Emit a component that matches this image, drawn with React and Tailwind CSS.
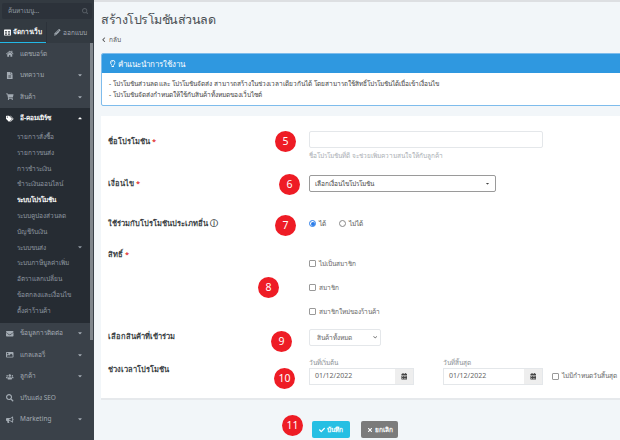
import React from "react";
import { FaHome, FaFileAlt, FaShoppingCart, FaTags, FaEnvelope, FaImage, FaUsers, FaSearch, FaBullhorn, FaCaretDown, FaCaretUp, FaTable, FaPencilAlt, FaChevronLeft, FaCheck, FaTimes, FaCalendarAlt, FaRegLightbulb, FaChevronDown } from "react-icons/fa";

const font = { fontFamily: '"Noto Sans", Roboto, "Liberation Sans", sans-serif' };

function MainItem({ Icon, label, caret, active }) {
  return (
    <div className={`flex h-[21.5px] items-center pl-[6px] pr-[7px] text-[6.5px] ${active ? "bg-[#262c33] font-bold text-white" : "text-[#a3abb3]"}`}>
      <span className="flex w-[13px] justify-start"><Icon className={`text-[7.5px] ${active ? "text-white" : "text-[#a3abb3]"}`} /></span>
      <span className="ml-[1px] flex-1 truncate">{label}</span>
      {caret === "down" && <FaCaretDown className="text-[6px]" />}
      {caret === "up" && <FaCaretUp className="text-[6px]" />}
    </div>
  );
}

function SubItem({ label, active, caret }) {
  return (
    <div className={`flex h-[15.8px] items-center pl-[17px] pr-[7px] text-[6.5px] ${active ? "font-bold text-white" : "text-[#8f98a1]"}`}>
      <span className="flex-1 truncate">{label}</span>
      {caret && <FaCaretDown className="text-[6px]" />}
    </div>
  );
}

function Badge({ n, className }) {
  return (
    <div className={`absolute flex h-[21px] w-[21px] items-center justify-center rounded-full bg-[#ee1c25] text-[10.5px] text-white ${className}`}>{n}</div>
  );
}

function Label({ children, req, className = "" }) {
  return (
    <div className={`text-[7.5px] font-semibold text-[#3a3f44] ${className}`}>
      {children}{req && <span className="text-[#e02b2b]"> *</span>}
    </div>
  );
}

function Check({ label }) {
  return (
    <div className="flex items-center gap-[3px] whitespace-nowrap text-[6.5px] text-[#666]">
      <span className="h-[7px] w-[7px] rounded-[1px] border border-[#999] bg-white" />
      <span>{label}</span>
    </div>
  );
}

function DateField({ label, w }) {
  return (
    <div>
      <div className="mb-[1px] text-[6.5px] leading-[9px] text-[#8a8f94]">{label}</div>
      <div className={`flex h-[17px] border border-[#e4e7ea] bg-white ${w}`}>
        <div className="flex flex-1 items-center pl-[5px] text-[7px] text-[#666]">01/12/2022</div>
        <div className="flex w-[18px] items-center justify-center bg-[#eeeeee]"><FaCalendarAlt className="text-[6.5px] text-[#444]" /></div>
      </div>
    </div>
  );
}

export default function App() {
  return (
    <div className="flex h-[440px] w-[620px] overflow-hidden bg-[#f2f6f9]" style={font}>
      <aside className="relative h-full w-[94px] shrink-0 overflow-hidden bg-[#3a4149]">
        <div className="bg-[#333a41] px-[2px] pb-[3px] pt-[3px]">
          <div className="flex h-[16px] items-center justify-between rounded-[2px] bg-[#2c323a] pl-[6px] pr-[4px] text-[6.5px] text-[#8f98a1]">
            <span>ค้นหาเมนู...</span>
            <FaSearch className="text-[6.5px] text-[#555c63]" />
          </div>
        </div>
        <div className="flex h-[21px] bg-[#333a41] text-[6.5px] font-bold">
          <div className="flex w-[46px] items-center justify-center gap-[2px] border-b-[1.5px] border-[#22b8e6] text-white">
            <FaTable className="text-[7px]" /><span>จัดการเว็บ</span>
          </div>
          <div className="flex flex-1 items-center justify-center gap-[2px] border-l border-[#2c323a] font-normal text-[#a3abb3]">
            <FaPencilAlt className="text-[6.5px]" /><span>ออกแบบ</span>
          </div>
        </div>
        <div className="pr-[4px]">
          <MainItem Icon={FaHome} label="แดชบอร์ด" />
          <MainItem Icon={FaFileAlt} label="บทความ" caret="down" />
          <MainItem Icon={FaShoppingCart} label="สินค้า" caret="down" />
          <div className="bg-[#262c33] pb-[4px]">
            <MainItem Icon={FaTags} label="อี-คอมเมิร์ซ" caret="up" active />
            <SubItem label="รายการสั่งซื้อ" />
            <SubItem label="รายการขนส่ง" />
            <SubItem label="การชำระเงิน" />
            <SubItem label="ชำระเงินออนไลน์" />
            <SubItem label="ระบบโปรโมชัน" active />
            <SubItem label="ระบบคูปองส่วนลด" />
            <SubItem label="บัญชีรับเงิน" />
            <SubItem label="ระบบขนส่ง" caret />
            <SubItem label="ระบบภาษีมูลค่าเพิ่ม" />
            <SubItem label="อัตราแลกเปลี่ยน" />
            <SubItem label="ข้อตกลงและเงื่อนไข" />
            <SubItem label="ตั้งค่าร้านค้า" />
          </div>
          <MainItem Icon={FaEnvelope} label="ข้อมูลการติดต่อ" caret="down" />
          <MainItem Icon={FaImage} label="แกลเลอรี่" caret="down" />
          <MainItem Icon={FaUsers} label="ลูกค้า" caret="down" />
          <MainItem Icon={FaSearch} label="ปรับแต่ง SEO" />
          <MainItem Icon={FaBullhorn} label="Marketing" caret="down" />
        </div>
        <div className="absolute right-[1px] top-[43px] h-[297px] w-[3px] bg-[#80868c]" />
      </aside>

      <main className="relative min-w-0 flex-1 border-t-[2px] border-[#dddfe2] pl-[7px]">
        <h1 className="mt-[8px] text-[12.5px] leading-[20px] tracking-[-0.5px] text-[#4a4f54]">สร้างโปรโมชันส่วนลด</h1>
        <div className="mt-[5px] flex items-center gap-[2px] text-[6.5px] leading-[9px] text-[#555]">
          <FaChevronLeft className="text-[5.5px]" /><span>กลับ</span>
        </div>
        <section className="mt-[9px] -mr-[4px] overflow-hidden rounded-[2px] border border-[#7ebcec] bg-white">
          <div className="flex h-[19px] items-center gap-[1px] bg-[#2f98e0] pl-[7px] text-[8px] font-medium text-white">
            <FaRegLightbulb className="text-[7.5px]" /><span>คำแนะนำการใช้งาน</span>
          </div>
          <div className="whitespace-nowrap px-[7px] py-[5px] text-[6.5px] leading-[11px] text-[#444]">
            <div>- โปรโมชันส่วนลด และ โปรโมชันจัดส่ง สามารถสร้างในช่วงเวลาเดียวกันได้ โดยสามารถใช้สิทธิ์โปรโมชันได้เมื่อเข้าเงื่อนไข</div>
            <div>- โปรโมชันจัดส่งกำหนดให้ใช้กับสินค้าทั้งหมดของเว็บไซต์</div>
          </div>
        </section>

        <section className="relative mt-[10px] h-[284px] border-b-[2px] border-[#e6e9ec] bg-white">
          <Label req className="absolute left-[7px] top-[20px]">ชื่อโปรโมชัน</Label>
          <Badge n="5" className="left-[174px] top-[15px]" />
          <input readOnly className="absolute left-[208px] top-[15px] h-[17px] w-[234px] rounded-[2px] border border-[#e4e7ea] bg-white" />
          <div className="absolute left-[208px] top-[35px] text-[6.5px] text-[#a8adb2]">ชื่อโปรโมชันที่ดี จะช่วยเพิ่มความสนใจให้กับลูกค้า</div>

          <Label req className="absolute left-[7px] top-[62px]">เงื่อนไข</Label>
          <Badge n="6" className="left-[178px] top-[58px]" />
          <div className="absolute left-[208px] top-[59px] flex h-[17px] w-[187px] items-center justify-between rounded-[2px] border border-[#9a9a9a] bg-white pl-[5px] pr-[5px] text-[6.5px] text-[#444]">
            <span>เลือกเงื่อนไขโปรโมชัน</span><FaCaretDown className="text-[5px]" />
          </div>

          <Label className="absolute left-[7px] top-[102px]">ใช้ร่วมกับโปรโมชันประเภทอื่น ⓘ</Label>
          <Badge n="7" className="left-[174px] top-[99px]" />
          <div className="absolute left-[208px] top-[103px] flex items-center text-[6.5px] text-[#555]">
            <span className="flex h-[7px] w-[7px] items-center justify-center rounded-full border border-[#2b7de9]"><span className="h-[4px] w-[4px] rounded-full bg-[#2b7de9]" /></span>
            <span className="ml-[3px]">ได้</span>
            <span className="ml-[13px] h-[7px] w-[7px] rounded-full border border-[#888]" />
            <span className="ml-[3px]">ไม่ได้</span>
          </div>

          <Label req className="absolute left-[7px] top-[133px]">สิทธิ์</Label>
          <Badge n="8" className="left-[157px] top-[161px]" />
          <div className="absolute left-[208px] top-[143px] flex flex-col gap-[14px]">
            <Check label="ไม่เป็นสมาชิก" />
            <Check label="สมาชิก" />
            <Check label="สมาชิกใหม่ของร้านค้า" />
          </div>

          <Label className="absolute left-[7px] top-[215px]">เลือกสินค้าที่เข้าร่วม</Label>
          <Badge n="9" className="left-[170px] top-[215px]" />
          <div className="absolute left-[208px] top-[213px] flex h-[17px] w-[72px] items-center justify-between rounded-[2px] border border-[#e4e7ea] bg-white pl-[7px] pr-[3px] text-[6.5px] text-[#666]">
            <span>สินค้าทั้งหมด</span><FaChevronDown className="text-[4.5px]" />
          </div>

          <Label className="absolute left-[7px] top-[248px]">ช่วงเวลาโปรโมชัน</Label>
          <Badge n="10" className="left-[173px] top-[252px]" />
          <div className="absolute left-[208px] top-[242px] flex items-end">
            <DateField label="วันที่เริ่มต้น" w="w-[105px]" />
            <div className="ml-[29px]"><DateField label="วันที่สิ้นสุด" w="w-[100px]" /></div>
            <div className="mb-[4px] ml-[9px]"><Check label="ไม่มีกำหนดวันสิ้นสุด" /></div>
          </div>
        </section>

        <Badge n="11" className="left-[188px] top-[413px]" />
        <div className="absolute left-[218px] top-[419px] flex gap-[11px] text-[6.5px] font-semibold text-white">
          <div className="flex h-[17px] w-[38px] items-center justify-center gap-[2px] rounded-[2px] bg-[#26bfe3]"><FaCheck className="text-[6px]" />บันทึก</div>
          <div className="flex h-[17px] w-[37px] items-center justify-center gap-[2px] rounded-[2px] bg-[#7b7b7b]"><FaTimes className="text-[6px]" />ยกเลิก</div>
        </div>
      </main>
    </div>
  );
}
